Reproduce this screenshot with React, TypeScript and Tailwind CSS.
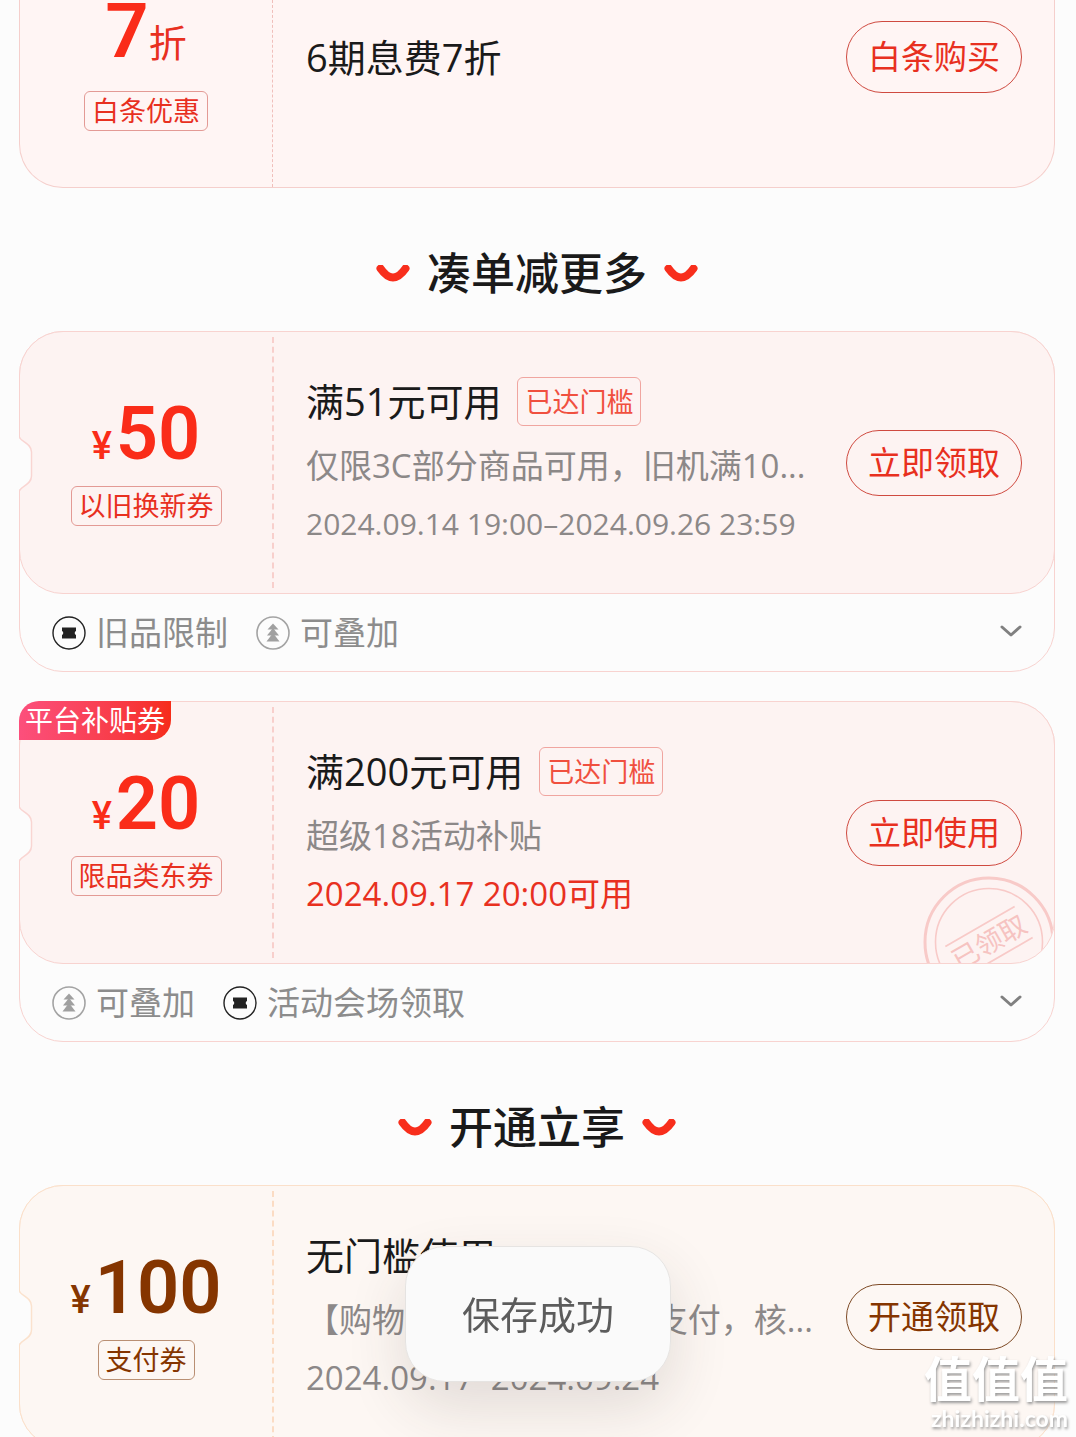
import clsx from "clsx";
import type { ReactNode } from "react";

type Theme = "red" | "gold";
type MarkKind = "limit" | "stack";

interface Mark {
  kind: MarkKind;
  label: string;
}

interface Coupon {
  id: string;
  theme: Theme;
  amount: string;
  tag: string;
  title: string;
  badge?: string;
  desc: string;
  date: string;
  dateClassName: string;
  action: string;
  ribbon?: string;
  received?: boolean;
  marks?: Mark[];
}

const MORE_COUPONS: Coupon[] = [
  {
    id: "trade-in",
    theme: "red",
    amount: "50",
    tag: "以旧换新券",
    title: "满51元可用",
    badge: "已达门槛",
    desc: "仅限3C部分商品可用，旧机满10...",
    date: "2024.09.14 19:00–2024.09.26 23:59",
    dateClassName: "text-[30px] text-[#8c8888]",
    action: "立即领取",
    marks: [
      { kind: "limit", label: "旧品限制" },
      { kind: "stack", label: "可叠加" },
    ],
  },
  {
    id: "category",
    theme: "red",
    amount: "20",
    tag: "限品类东券",
    title: "满200元可用",
    badge: "已达门槛",
    desc: "超级18活动补贴",
    date: "2024.09.17 20:00可用",
    dateClassName: "text-[33px] text-[#e8301f]",
    action: "立即使用",
    ribbon: "平台补贴券",
    received: true,
    marks: [
      { kind: "stack", label: "可叠加" },
      { kind: "limit", label: "活动会场领取" },
    ],
  },
];

const OPEN_COUPONS: Coupon[] = [
  {
    id: "pay",
    theme: "gold",
    amount: "100",
    tag: "支付券",
    title: "无门槛使用",
    desc: "【购物立减】满2元白条支付，核...",
    date: "2024.09.17–2024.09.24",
    dateClassName: "text-[33px] text-[#8c8888]",
    action: "开通领取",
  },
];

function Smile() {
  return (
    <svg width="34" height="18" viewBox="0 0 34 18" fill="none" aria-hidden="true">
      <path
        d="M4.500 3.500C8 8.500 12 12.500 17 12.500S26 8.500 29.500 3.500"
        stroke="#f82e1c"
        strokeWidth="8"
        strokeLinecap="round"
      />
    </svg>
  );
}

function SectionTitle({ children }: { children: ReactNode }) {
  return (
    <div className="mt-14 mb-7 flex h-[59px] items-center justify-center gap-[17px]">
      <Smile />
      <h2 className="text-[44px] leading-[59px] font-medium text-[#1a1a1a]">{children}</h2>
      <Smile />
    </div>
  );
}

function MarkIcon({ kind }: { kind: MarkKind }) {
  if (kind === "limit") {
    return (
      <svg width="34" height="34" viewBox="0 0 34 34" fill="none" aria-hidden="true">
        <circle cx="17" cy="17" r="16" stroke="#222" strokeWidth="1.4" />
        <path
          d="M10 11.500H24V15C22.300 15.800 22.300 18.200 24 19V22.500H10V19C11.700 18.200 11.700 15.800 10 15Z"
          fill="#222"
        />
      </svg>
    );
  }

  return (
    <svg width="34" height="34" viewBox="0 0 34 34" fill="none" aria-hidden="true">
      <circle cx="17" cy="17" r="16" stroke="#a3a3a3" strokeWidth="1.6" />
      <path d="M17 7.500L22.500 13.500H11.500Z" fill="#a0a0a0" />
      <path d="M17 12L23 19.500H11Z" fill="#a0a0a0" />
      <path d="M17 17L23.500 25.500H10.500Z" fill="#a0a0a0" />
    </svg>
  );
}

function Notch({ theme }: { theme: Theme }) {
  return (
    <svg
      className="absolute top-[105px] -left-px"
      width="14"
      height="54"
      viewBox="0 0 14 54"
      fill="none"
      aria-hidden="true"
    >
      <path d="M0 0.500C1.500 5 12.500 6 12.500 15V39C12.500 48 1.500 49 0 53.500Z" fill="#fcfcfc" />
      <path
        d="M0.500 0C1.500 5 12.500 6 12.500 15V39C12.500 48 1.500 49 0.500 54"
        stroke={theme === "red" ? "#f9d5d2" : "#fbe2cd"}
        strokeWidth="1.5"
      />
    </svg>
  );
}

function ReceivedStamp() {
  return (
    <svg
      className="absolute -right-px -bottom-[45px]"
      width="132"
      height="132"
      viewBox="0 0 132 132"
      fill="none"
      stroke="#f8cac8"
      aria-hidden="true"
    >
      <circle cx="66" cy="66" r="64" strokeWidth="3" />
      <circle cx="66" cy="66" r="53.500" strokeWidth="1.6" />
      <g transform="rotate(-30 66 66)">
        <path d="M26 48H106M26 84H106" strokeWidth="1.8" />
        <text x="66" y="76" textAnchor="middle" fontSize="27" fill="#f6c3c1" stroke="none">
          已领取
        </text>
      </g>
    </svg>
  );
}

function Divider({ theme }: { theme: Theme }) {
  return (
    <div
      className={clsx(
        "my-[5px] w-0 border-l-2 border-dashed",
        theme === "red" ? "border-[#f8cfcc]" : "border-[#fbdcc4]",
      )}
    />
  );
}

function Tag({ theme, children }: { theme: Theme; children: ReactNode }) {
  return (
    <span
      className={clsx(
        "rounded-md border px-[7px] text-[27px] leading-[38px]",
        theme === "red" ? "border-[#e39a95] text-[#e8301f]" : "border-[#b98f73] text-[#853500]",
      )}
    >
      {children}
    </span>
  );
}

interface ActionButtonProps {
  theme: Theme;
  tall?: boolean;
  children: ReactNode;
}

function ActionButton({ theme, tall, children }: ActionButtonProps) {
  return (
    <button
      type="button"
      className={clsx(
        "mr-8 w-44 shrink-0 rounded-full border text-[33px] leading-[48px]",
        tall ? "py-[11px]" : "py-2",
        theme === "red" ? "border-[#cf4a40] text-[#e8301f]" : "border-[#7d4a25] text-[#853500]",
      )}
    >
      {children}
    </button>
  );
}

function CouponTicket({ coupon }: { coupon: Coupon }) {
  const { theme } = coupon;

  return (
    <div
      className={clsx(
        "relative -m-px flex h-[263px] overflow-hidden rounded-[44px] border",
        theme === "red" ? "border-[#f8d3d0] bg-[#fdf3f2]" : "border-[#fbe0ca] bg-[#fdf7f3]",
      )}
    >
      <div className="flex w-[252px] shrink-0 flex-col items-center pt-16">
        <p
          className={clsx(
            "mb-3.5 flex items-baseline gap-1 font-[Roboto]",
            theme === "red" ? "text-[#fa2c19]" : "text-[#853500]",
          )}
        >
          <span className="text-[38px] leading-none font-medium">¥</span>
          <span className="text-[74px] leading-[76px] font-semibold">{coupon.amount}</span>
        </p>
        <Tag theme={theme}>{coupon.tag}</Tag>
      </div>
      <Divider theme={theme} />
      <div className="min-w-0 flex-1 pt-[45px] pl-8">
        <div className="mb-[11px] flex h-[49px] items-center gap-4">
          <h3 className="text-[38px] whitespace-nowrap text-[#1a1a1a]">{coupon.title}</h3>
          {coupon.badge && (
            <span className="rounded-md border border-[#f0a5a0] px-[7px] text-[27px] leading-[47px] whitespace-nowrap text-[#f0503f]">
              {coupon.badge}
            </span>
          )}
        </div>
        <p className="text-[33px] leading-[58px] whitespace-nowrap text-[#8c8888]">{coupon.desc}</p>
        <p className={clsx("leading-[58px] whitespace-nowrap", coupon.dateClassName)}>
          {coupon.date}
        </p>
      </div>
      <div className="flex items-center">
        <ActionButton theme={theme}>{coupon.action}</ActionButton>
      </div>
      {coupon.received && <ReceivedStamp />}
    </div>
  );
}

function CouponCard({ coupon }: { coupon: Coupon }) {
  return (
    <article
      className={clsx(
        "relative rounded-[44px] border",
        coupon.theme === "red" ? "border-[#f8d3d0]" : "border-[#fbe0ca]",
      )}
    >
      <CouponTicket coupon={coupon} />
      <Notch theme={coupon.theme} />
      {coupon.ribbon && (
        <span className="absolute -top-px -left-px rounded-tl-[20px] rounded-br-[20px] bg-linear-to-r from-[#fc4f7c] to-[#f62c18] px-1.5 text-[28px] leading-[39px] text-white">
          {coupon.ribbon}
        </span>
      )}
      {coupon.marks && (
        <div className="flex h-[78px] items-center gap-7 px-8 pt-0.5">
          {coupon.marks.map((mark) => (
            <span key={mark.label} className="flex items-center gap-2.5 text-[33px] text-[#8c8c8c]">
              <MarkIcon kind={mark.kind} />
              {mark.label}
            </span>
          ))}
          <button type="button" aria-label="展开" className="ml-auto pb-1">
            <svg width="22" height="12" viewBox="0 0 22 12" fill="none">
              <path
                d="M2 2L11 10L20 2"
                stroke="#808080"
                strokeWidth="3"
                strokeLinecap="round"
                strokeLinejoin="round"
              />
            </svg>
          </button>
        </div>
      )}
    </article>
  );
}

function BaitiaoCard() {
  return (
    <article className="flex h-[188px] rounded-b-[44px] border border-t-0 border-[#f5cfcc] bg-[#fff5f4]">
      <div className="flex w-[252px] shrink-0 flex-col items-center">
        <p className="mb-[29px] flex items-baseline">
          <span className="font-[Roboto] text-[76px] leading-[62px] font-semibold text-[#fa2c19]">
            7
          </span>
          <span className="text-[38px] leading-none text-[#e8301f]">折</span>
        </p>
        <Tag theme="red">白条优惠</Tag>
      </div>
      <div className="w-0 border-l border-dashed border-[#f0bfbb]" />
      <h3 className="flex-1 pt-7 pl-[33px] text-[38px] leading-[58px] text-[#1a1a1a]">
        6期息费7折
      </h3>
      <div className="pt-[21px]">
        <ActionButton theme="red" tall>
          白条购买
        </ActionButton>
      </div>
    </article>
  );
}

export default function App() {
  return (
    <main className="h-screen overflow-hidden bg-[#fcfcfc] pr-[21px] pl-[19px] font-['Open_Sans','Noto_Sans_CJK_SC',sans-serif]">
      <BaitiaoCard />

      <SectionTitle>凑单减更多</SectionTitle>
      <div className="flex flex-col gap-[29px]">
        {MORE_COUPONS.map((coupon) => (
          <CouponCard key={coupon.id} coupon={coupon} />
        ))}
      </div>

      <SectionTitle>开通立享</SectionTitle>
      {OPEN_COUPONS.map((coupon) => (
        <CouponCard key={coupon.id} coupon={coupon} />
      ))}

      <div
        role="status"
        className="fixed bottom-[55px] left-1/2 -translate-x-1/2 rounded-[40px] border border-[#e6e4e2] bg-[#fafafa] px-14 py-10 text-[38px] leading-[54px] whitespace-nowrap text-[#5c5c5c] shadow-[0_24px_60px_rgba(60,50,40,0.14)]"
      >
        保存成功
      </div>

      <div className="fixed right-2 bottom-1.5 flex flex-col items-end font-bold text-white [text-shadow:1px_2px_3px_#999]">
        <p className="text-[48px] leading-[52px]">值值值</p>
        <p className="font-[Lato] text-[23px] leading-[26px]">zhizhizhi.com</p>
      </div>
    </main>
  );
}
